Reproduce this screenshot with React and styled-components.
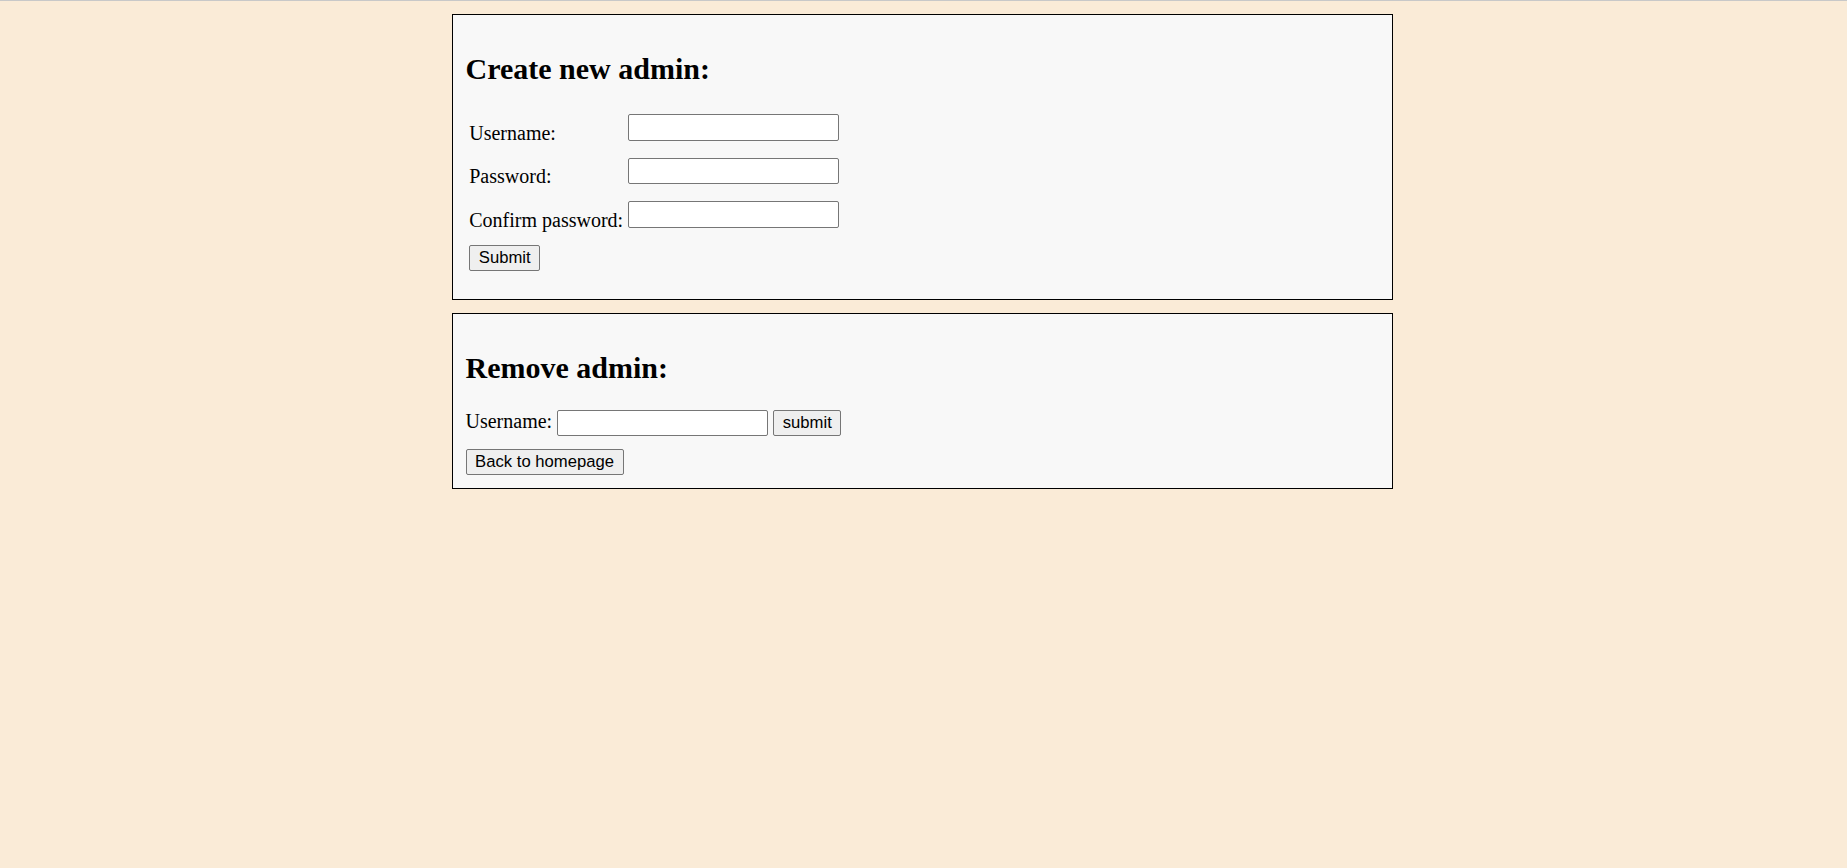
import React from "react";
import styled, { createGlobalStyle } from "styled-components";

// global page look
const GlobalStyle = createGlobalStyle`
  html,
  body {
    margin: 0;
  }
  body {
    min-height: 100vh;
    box-sizing: border-box;
    border-top: 1px solid #c8c8c8;
    background: #faebd7;
    color: #000;
    font-family: "Liberation Serif", "Times New Roman", serif;
  }
`;

// styled-components
const Page = styled.main`
  display: flex;
  flex-direction: column;
  align-items: center;
  gap: 13px;
  padding: 13px 2px 0 0;
`;
const Panel = styled.section`
  box-sizing: border-box;
  width: 941px;
  padding: 12.5px;
  border: 1px solid #000;
  background: #f8f8f8;
`;
const Heading = styled.h2`
  margin: 24px 0 25px;
  font-size: 30px;
  line-height: 34px;
  font-weight: bold;
`;
const FormGrid = styled.form`
  display: grid;
  grid-template-columns: auto auto;
  justify-content: start;
  column-gap: 5px;
  row-gap: 5px;
  margin: 0;
  padding: 3.75px 0 15.8px 3.75px;
`;
const FieldLabel = styled.label`
  display: flex;
  align-items: center;
  box-sizing: border-box;
  height: 38.5px;
  padding-bottom: 2px;
  font-size: 20px;
  line-height: 22px;
  white-space: nowrap;
`;
const FieldCell = styled.div`
  height: 38.5px;
`;
const FullRow = styled.div`
  grid-column: 1 / -1;
`;
const TextInput = styled.input`
  box-sizing: border-box;
  width: 211px;
  height: 26.5px;
  margin: 0;
  padding: 1px 2.5px;
  border: 1px solid #767676;
  border-radius: 2px;
  background: #fff;
  font-family: "Liberation Sans", Arial, sans-serif;
  font-size: 16.67px;
`;
const Button = styled.button`
  box-sizing: border-box;
  height: 26px;
  margin: 0;
  padding: 0 8.6px;
  border: 1px solid #767676;
  border-radius: 2px;
  background: #efefef;
  color: #000;
  font-family: "Liberation Sans", Arial, sans-serif;
  font-size: 16.67px;
  line-height: normal;
  cursor: pointer;
`;
const InlineRow = styled.form`
  display: flex;
  align-items: baseline;
  gap: 5px;
  margin: 0 0 12.8px;
  font-size: 20px;
  line-height: 22px;
`;
const Footer = styled.div`
  display: flex;
  padding-bottom: 1px;
`;

const fields = [
  { id: "username", label: "Username:", type: "text" },
  { id: "password", label: "Password:", type: "password" },
  { id: "confirm", label: "Confirm password:", type: "password" },
];

const App = () => (
  <>
    <GlobalStyle />
    <Page>
      <Panel>
        <Heading>Create new admin:</Heading>
        <FormGrid onSubmit={e => e.preventDefault()}>
          {fields.map(field => (
            <React.Fragment key={field.id}>
              <FieldLabel htmlFor={field.id}>{field.label}</FieldLabel>
              <FieldCell>
                <TextInput id={field.id} type={field.type} />
              </FieldCell>
            </React.Fragment>
          ))}
          <FullRow>
            <Button type="submit">Submit</Button>
          </FullRow>
        </FormGrid>
      </Panel>
      <Panel>
        <Heading>Remove admin:</Heading>
        <InlineRow onSubmit={e => e.preventDefault()}>
          <label htmlFor="remove-username">Username:</label>
          <TextInput id="remove-username" type="text" />
          <Button type="submit">submit</Button>
        </InlineRow>
        <Footer>
          <Button type="button">Back to homepage</Button>
        </Footer>
      </Panel>
    </Page>
  </>
);

export default App;
